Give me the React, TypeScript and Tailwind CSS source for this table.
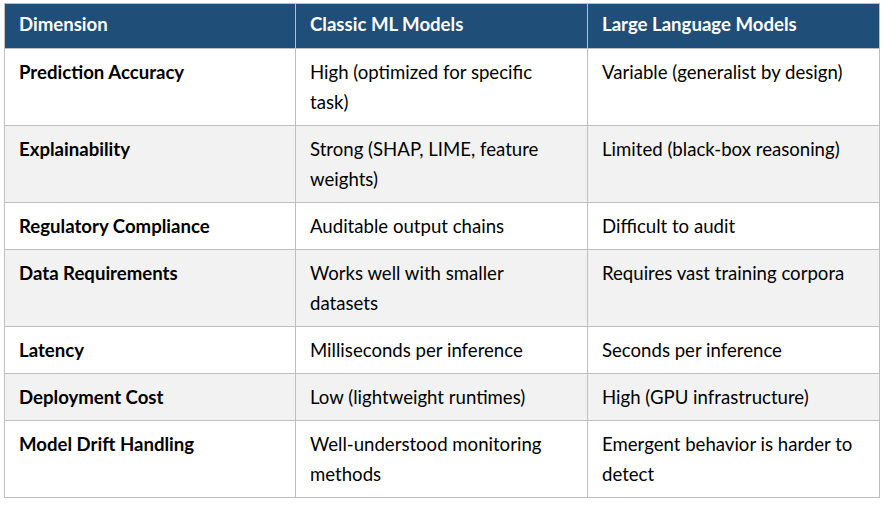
import React from "react";

const rows: [string, string, string][] = [
  ["Prediction Accuracy", "High (optimized for specific task)", "Variable (generalist by design)"],
  ["Explainability", "Strong (SHAP, LIME, feature weights)", "Limited (black-box reasoning)"],
  ["Regulatory Compliance", "Auditable output chains", "Difficult to audit"],
  ["Data Requirements", "Works well with smaller datasets", "Requires vast training corpora"],
  ["Latency", "Milliseconds per inference", "Seconds per inference"],
  ["Deployment Cost", "Low (lightweight runtimes)", "High (GPU infrastructure)"],
  ["Model Drift Handling", "Well-understood monitoring methods", "Emergent behavior is harder to detect"],
];

export default function App() {
  return (
    <div className="w-[887px] h-[506px] bg-white pt-[3px] pl-[4px]" style={{ fontFamily: "Lato, 'Open Sans', sans-serif" }}>
      <table className="w-[875px] border-collapse table-fixed text-[18.6px] leading-[30px] text-black">
        <colgroup>
          <col className="w-[291px]" />
          <col className="w-[292px]" />
          <col className="w-[292px]" />
        </colgroup>
        <thead>
          <tr className="bg-[#1f4e79] text-white">
            <th className="border border-[#bfbfbf] px-[14px] pt-[5px] pb-[9px] text-left font-bold align-top">Dimension</th>
            <th className="border border-[#bfbfbf] px-[14px] pt-[5px] pb-[9px] text-left font-bold align-top">Classic ML Models</th>
            <th className="border border-[#bfbfbf] px-[14px] pt-[5px] pb-[9px] text-left font-bold align-top">Large Language Models</th>
          </tr>
        </thead>
        <tbody>
          {rows.map((r, i) => (
            <tr key={i} className={i % 2 === 1 ? "bg-[#f2f2f2]" : "bg-white"}>
              <td className="border border-[#bfbfbf] px-[14px] py-[8px] align-top font-bold">{r[0]}</td>
              <td className="border border-[#bfbfbf] px-[14px] py-[8px] align-top">{r[1]}</td>
              <td className="border border-[#bfbfbf] px-[14px] py-[8px] align-top">{r[2]}</td>
            </tr>
          ))}
        </tbody>
      </table>
    </div>
  );
}
